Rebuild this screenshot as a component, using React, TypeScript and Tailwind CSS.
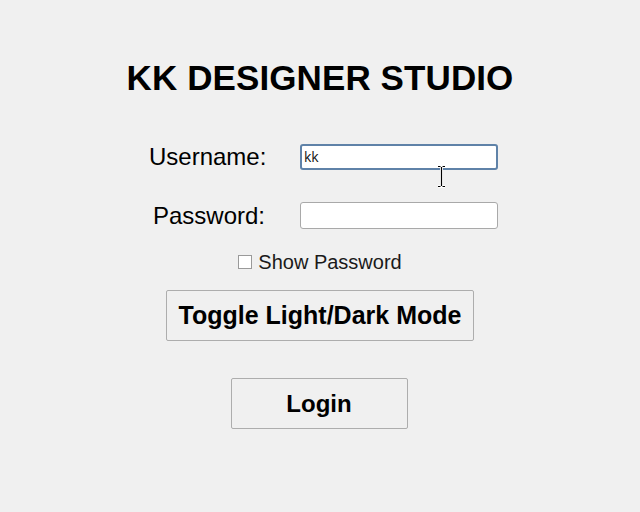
import React from "react";

export default function App() {
  return (
    <div
      className="relative w-full h-[512px] bg-[#f0f0f0] flex flex-col items-center text-black"
      style={{ fontFamily: '"Liberation Sans", Arial, sans-serif' }}
    >
      <h1 className="mt-[58px] text-[35px] leading-[40px] font-bold tracking-[0.1px]">
        KK DESIGNER STUDIO
      </h1>

      <div className="ml-[7px] mt-[46px] grid grid-cols-[116px_198px] gap-x-[35px] items-center">
        <label className="text-[24px] leading-[26px] text-right whitespace-nowrap">Username:</label>
        <div className="h-[26px] bg-white border-2 border-[#5f82a8] rounded-[3px] flex items-center pl-[2px]">
          <span
            className="text-[14px] leading-none text-[#111]"
            style={{ fontFamily: '"Open Sans", "Noto Sans", sans-serif' }}
          >
            kk
          </span>
        </div>
        <label className="mt-[32px] text-[24px] leading-[26px] text-right whitespace-nowrap">Password:</label>
        <div className="mt-[32px] h-[27px] bg-white border border-[#a9a9a9] rounded-[3px]" />
      </div>

      <div className="mt-[21px] h-[24px] flex items-center gap-[6px]">
        <div className="w-[14px] h-[14px] bg-white border border-[#9a9a9a]" />
        <span className="text-[20px] leading-[24px] text-[#1a1a1a]">Show Password</span>
      </div>

      <button className="mt-[16px] w-[308px] h-[51px] bg-[#f0f0f0] border border-[#adadad] rounded-[2px] text-[25px] font-bold flex items-center justify-center">
        Toggle Light/Dark Mode
      </button>

      <button className="mt-[37px] -ml-[2px] w-[177px] h-[51px] bg-[#f0f0f0] border border-[#adadad] rounded-[2px] text-[24px] font-bold flex items-center justify-center">
        Login
      </button>

      <svg
        className="absolute left-[436px] top-[165px]"
        width="11"
        height="23"
        viewBox="0 0 11 23"
      >
        <path d="M2 1.5h7M5.5 1.5v20M2 21.5h7" stroke="#fff" strokeWidth="3" fill="none" />
        <path d="M2 1.5h2.5M6.5 1.5h2.5M5.5 2v19M2 21.5h2.5M6.5 21.5h2.5" stroke="#000" strokeWidth="1.2" fill="none" />
      </svg>
    </div>
  );
}
